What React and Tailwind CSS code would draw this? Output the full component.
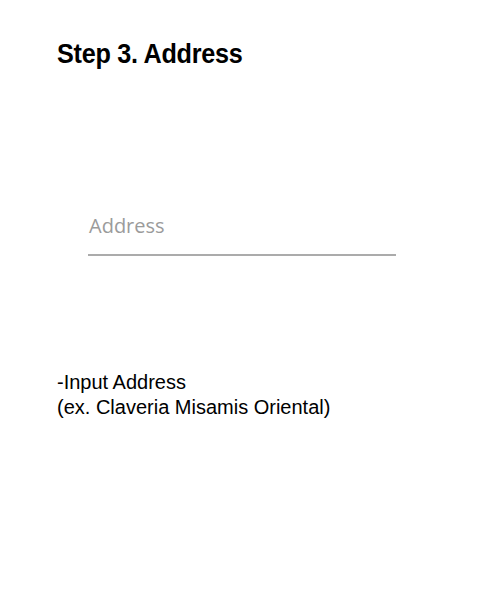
export default function App() {
  return (
    <div className="w-[500px] h-[600px] bg-white relative overflow-hidden">
      <h1 className="absolute left-[57px] top-[40px] origin-left scale-x-[0.9] text-[28px] font-bold leading-none tracking-[-0.3px] text-black font-['Liberation_Sans',Arial,sans-serif] whitespace-nowrap">
        Step 3. Address
      </h1>
      <div className="absolute left-[88px] top-[210px] w-[308px]">
        <div className="text-[20px] leading-[32px] text-[#9b9b9b] font-['Open_Sans','Noto_Sans',sans-serif] pl-[1px]">Address</div>
        <div className="mt-[12px] h-[2px] bg-[#ababab]" />
      </div>
      <div className="absolute left-[57px] top-[370px] text-[20px] leading-[25px] text-black font-['Liberation_Sans',Arial,sans-serif]">
        <div>-Input Address</div>
        <div>(ex. Claveria Misamis Oriental)</div>
      </div>
    </div>
  )
}
